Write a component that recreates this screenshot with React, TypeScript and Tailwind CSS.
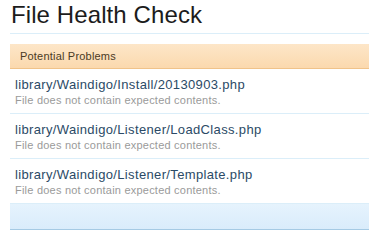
import React from "react";

const items = [
  "library/Waindigo/Install/20130903.php",
  "library/Waindigo/Listener/LoadClass.php",
  "library/Waindigo/Listener/Template.php",
];

export default function App() {
  return (
    <div
      className="w-[369px] h-[242px] bg-white overflow-hidden"
      style={{ fontFamily: '"Liberation Sans", Arial, sans-serif' }}
    >
      <div className="pl-[10px]">
        <h1 className="h-[34px] border-b border-[#dbeef9] pl-[1px] text-[24px] leading-[30px] tracking-[0.1px] text-[#1c1c1c]">
          File Health Check
        </h1>
        <div className="mt-[10px] h-[25px] border-b border-[#f0c38a] bg-gradient-to-b from-[#fde6c8] to-[#fbd9ae] pl-[10px] text-[11px] leading-[24px] tracking-[0.2px] text-[#4a3a24]">
          Potential Problems
        </div>
        {items.map((t) => (
          <div
            key={t}
            className="h-[45px] border-b border-[#dbeef9] px-[5px] pt-[7px]"
          >
            <div className="text-[13px] leading-[17px] tracking-[0.35px] text-[#2b4a66]">{t}</div>
            <div className="text-[11px] leading-[15px] tracking-[0.22px] text-[#9a9a9a]">
              File does not contain expected contents.
            </div>
          </div>
        ))}
        <div className="h-[26px] border-b border-[#a5cae4] bg-gradient-to-b from-[#e6f3fd] to-[#d9ecfb]" />
      </div>
    </div>
  );
}
